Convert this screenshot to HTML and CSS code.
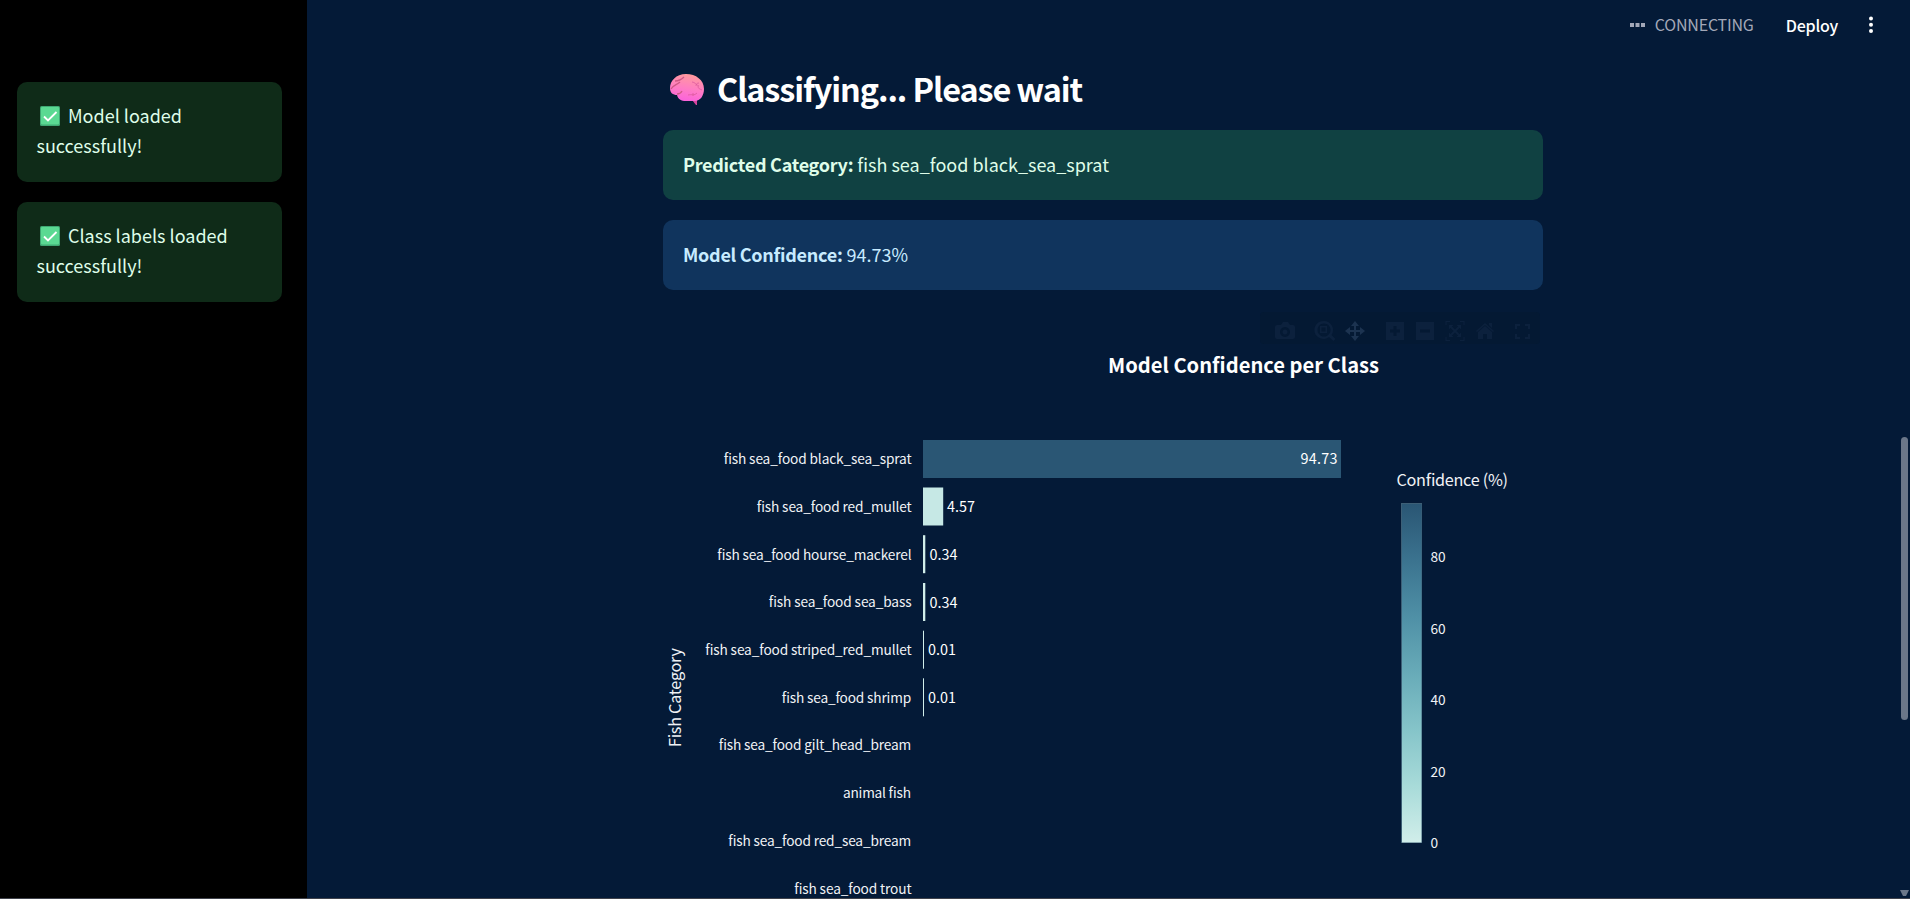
FILE: index.html
```html
<!DOCTYPE html>
<html lang="en">
<head>
<meta charset="utf-8">
<title>Fish classifier</title>
<link rel="stylesheet" href="styles.css">
</head>
<body>
<div class="app">
  <aside class="sidebar">
    <div class="alert side"><svg class="check" viewBox="0 0 20 20"><rect width="20" height="20" rx="1.5" fill="#3fa873"/><rect x="1" y="1" width="18" height="17.5" rx="1" fill="#5ad992"/><path d="M4 10.5l4 4 8.500-8.500" fill="none" stroke="#fff" stroke-width="1.8"/></svg><span>Model loaded</span><br><span>successfully!</span></div>
    <div class="alert side"><svg class="check" viewBox="0 0 20 20"><rect width="20" height="20" rx="1.5" fill="#3fa873"/><rect x="1" y="1" width="18" height="17.5" rx="1" fill="#5ad992"/><path d="M4 10.5l4 4 8.500-8.500" fill="none" stroke="#fff" stroke-width="1.8"/></svg><span>Class labels loaded</span><br><span>successfully!</span></div>
  </aside>
  <main class="main">
    <header class="toolbar">
      <svg class="dots" viewBox="0 0 16 4" fill="#a3a8b8"><path d="M0 0h4v4H0zM5.500 0h4v4h-4zM11 0h4v4h-4z"/></svg>
      <span class="status">CONNECTING</span>
      <span class="deploy">Deploy</span>
      <svg class="menu" viewBox="0 0 4 18" fill="#fff"><circle cx="2" cy="2.5" r="2"/><circle cx="2" cy="8.8" r="2"/><circle cx="2" cy="15.1" r="2"/></svg>
    </header>
    <section class="content">
      <h2 class="heading">
        <svg class="brain" viewBox="0 0 34 31">
          <defs><linearGradient id="pink" x1="0.6" y1="0" x2="0.4" y2="1"><stop offset="0" stop-color="#ff9a9c"/><stop offset="0.55" stop-color="#ff7cc4"/><stop offset="1" stop-color="#fb62dc"/></linearGradient></defs>
          <path d="M22 26l4 5h1v-5z" fill="#d8459f"/>
          <path d="M0 14C0 7 6 0 16 0c10 0 18 6 18 15 0 7-4 12-9 12H16C11 27 8 25 7 21 3 21 0 19 0 14z" fill="url(#pink)"/>
          <path d="M1 15c2-4 6-4 9-7M5 7c4 0 6-1 9-4M7 20c3 0 4-1 5-3" fill="none" stroke="#cf5a86" stroke-width="1.3"/>
          <path d="M22 8c3 0 4 3 7 4M26 12c0-2 1-3 3-3M28 12c0 3 2 3 4 4M18 21c4-1 6 1 9-2M23 19v3" fill="none" stroke="#dc5c9d" stroke-width="0.8"/>
        </svg>
        <span>Classifying... Please wait</span>
      </h2>
      <div class="alert success"><b>Predicted Category:</b> <span>fish sea_food black_sea_sprat</span></div>
      <div class="alert info"><b>Model Confidence:</b> <span>94.73%</span></div>
      <svg class="chart" viewBox="663 310 880 588">
        <defs><linearGradient id="scale" x1="0" y1="0" x2="0" y2="1"><stop offset="0" stop-color="#2a5674"/><stop offset="0.1667" stop-color="#3b738f"/><stop offset="0.3333" stop-color="#4f90a6"/><stop offset="0.5" stop-color="#68abb8"/><stop offset="0.6667" stop-color="#85c4c9"/><stop offset="0.8333" stop-color="#a8dbd9"/><stop offset="1" stop-color="#d1eeea"/></linearGradient></defs>
        <rect x="1260" y="312" width="280" height="32" rx="4" fill="#041933"/>
        <g class="modebar">
          <path fill-rule="evenodd" d="M1277 325h4l2-3h5l2 3h3q2 0 2 2v10q0 2-2 2h-16q-2 0-2-2v-10q0-2 2-2zM1285 327a5 5 0 1 0 .01 0zM1285 329.500a2.500 2.500 0 1 0 .01 0z"/>
          <path fill-rule="evenodd" d="M1324 321a9 9 0 0 1 7.500 14l4 4-2 2-4.500-4a9 9 0 1 1-5-16zM1324 323.500a6.500 6.500 0 1 0 .01 0z"/><path fill-rule="evenodd" d="M1320 326h7v7h-7zM1321.500 327.500v4h4v-4z"/>
          <path class="active" d="M1355 321l4 5h-3v4h4v-3l5 4-5 4v-3h-4v4h3l-4 5-4-5h3v-4h-4v3l-5-4 5-4v3h4v-4h-3z"/>
          <path fill-rule="evenodd" d="M1386 322h18v18h-18zM1393.500 326v3.500h-3.500v3h3.500v3.500h3v-3.500h3.500v-3h-3.500v-3.500z"/>
          <path fill-rule="evenodd" d="M1416 322h18v18h-18zM1420 329.500v3h10v-3z"/>
          <path class="thin" d="M1446 325v-3.500h4M1460 321.500h4v3.500M1464 337v3.500h-4M1450 340.500h-4v-3.500"/><path class="line" d="M1450.500 326.500l9 9M1459.500 326.500l-9 9"/><path d="M1449 325h4.500l-4.500 4.500zM1461 325v4.500l-4.500-4.500zM1461 337h-4.500l4.500-4.500zM1449 337v-4.500l4.500 4.500z"/>
          <path d="M1485 323l9 8-1 1-8-7-8 7-1-1zM1489 323h3v5l-3-3zM1478 332l7-6 7 6v7h-5v-5h-4v5h-5z"/>
          <path class="line" d="M1516 329v-4h4M1525 325h4v4M1529 334v4h-4M1520 338h-4v-4"/>
        </g>
        <text class="title" x="1108" y="372.500" textLength="271" lengthAdjust="spacingAndGlyphs">Model Confidence per Class</text>
        <g class="bars">
          <rect x="923" y="440" width="418" height="38" fill="#2a5674"/>
          <rect x="923" y="487.500" width="20.200" height="38" fill="#c6e8e5"/>
          <rect x="923" y="535.200" width="2.300" height="38" fill="#d1eeea"/>
          <rect x="923" y="583" width="2.300" height="38" fill="#d1eeea"/>
          <rect x="923" y="630.700" width="1" height="38" fill="#d1eeea"/>
          <rect x="923" y="678.300" width="1" height="38" fill="#d1eeea"/>
        </g>
        <g class="label">
          <text x="723.500" y="464" textLength="188">fish sea_food black_sea_sprat</text>
          <text x="756.500" y="512" textLength="155">fish sea_food red_mullet</text>
          <text x="717" y="560" textLength="194.500">fish sea_food hourse_mackerel</text>
          <text x="768.500" y="607" textLength="143">fish sea_food sea_bass</text>
          <text x="705" y="655" textLength="206.500">fish sea_food striped_red_mullet</text>
          <text x="781.500" y="703" textLength="129.500">fish sea_food shrimp</text>
          <text x="718.500" y="750" textLength="192.500">fish sea_food gilt_head_bream</text>
          <text x="843" y="798" textLength="68">animal fish</text>
          <text x="728" y="846" textLength="183">fish sea_food red_sea_bream</text>
          <text x="794" y="894" textLength="117.500">fish sea_food trout</text>
          <text x="1430.500" y="562" textLength="15">80</text>
          <text x="1430.500" y="634" textLength="15">60</text>
          <text x="1430.500" y="705" textLength="15">40</text>
          <text x="1430.500" y="777" textLength="15">20</text>
          <text x="1430.500" y="848" textLength="7.500">0</text>
        </g>
        <g class="value">
          <text x="1300.500" y="464" textLength="37">94.73</text>
          <text x="947" y="512" textLength="28">4.57</text>
          <text x="929.500" y="560" textLength="28">0.34</text>
          <text x="929.500" y="608" textLength="28">0.34</text>
          <text x="928" y="655" textLength="28">0.01</text>
          <text x="928" y="703" textLength="28">0.01</text>
        </g>
        <text class="axis" transform="translate(681 747) rotate(-90)" textLength="99">Fish Category</text>
        <text class="axis" x="1396.500" y="486" textLength="111.500">Confidence (%)</text>
        <rect x="1401" y="503" width="21" height="340" fill="#3d5f76"/>
        <rect x="1402" y="504" width="19.500" height="338.500" fill="url(#scale)"/>
      </svg>
    </section>
    <div class="scrollbar"><i class="thumb"></i><svg class="arrow" viewBox="0 0 9 6"><path d="M0 0h9L6 6H3z" fill="#6b7789"/></svg></div>
  </main>
</div>
</body>
</html>
```
FILE: styles.css
```css
* { box-sizing: border-box; }
body { margin: 0; overflow: hidden; background: #041a37; color: #fff; font-family: "Source Sans Pro", "Noto Sans CJK SC", "Noto Sans", sans-serif; font-size: 18px; line-height: 30px; }
.app { display: flex; height: 899px; border-bottom: 1px solid #3f424b; }
.sidebar { width: 307px; background: #000; padding: 82px 25px 0 17px; display: flex; flex-direction: column; gap: 20px; }
.main { position: relative; flex: 1; }
.alert { border-radius: 10px; padding: 19px 20px; height: 70px; white-space: nowrap; }
.alert b { letter-spacing: -0.27px; }
.side { height: 100px; background: #0f2b18; color: #dffde9; padding: 18px 20px 18px 19.5px; }
.check { width: 20px; height: 20px; margin: 0 8px 0 3.5px; vertical-align: -3px; }
.success { background: #104142; color: #dffde9; }
.info { background: #10345d; color: #c7ebff; margin-top: 20px; }
.toolbar { height: 50px; padding-right: 37px; display: flex; justify-content: flex-end; align-items: center; font-size: 16px; line-height: 24px; }
.dots { width: 16px; height: 4px; margin-right: 9px; }
.status { color: #a3a8b8; margin: -3px 32px 0 0; letter-spacing: -0.2px; }
.deploy { margin: -1px 31px 0 0; font-weight: 500; letter-spacing: -0.2px; }
.menu { width: 4px; height: 18px; }
.content { width: 880px; margin-left: 356px; }
.heading { height: 80px; margin: 0; padding: 12px 0 0 7px; display: flex; font-size: 32.4px; line-height: 52px; font-weight: 600; letter-spacing: -1.1px; white-space: nowrap; }
.brain { width: 34px; height: 31px; margin: 12px 13px 0 0; }
.chart { display: block; width: 880px; height: 588px; margin-top: 20px; fill: #f0f2f5; }
.modebar { fill: #0c213d; }
.active { fill: #1c3350; }
.line { fill: none; stroke: #0c213d; stroke-width: 2; }
.thin { fill: none; stroke: #0c213d; stroke-width: 1.2; }
.title { font-size: 20.300px; font-weight: 700; fill: #fff; }
.label { font-size: 13.700px; }
.value { font-size: 14.400px; fill: #fff; }
.axis { font-size: 16.200px; }
.scrollbar { position: absolute; right: 1px; top: 0; bottom: 0; width: 9px; }
.thumb { position: absolute; left: 1px; top: 437px; width: 7px; height: 283px; border-radius: 4px; background: #6b7789; }
.arrow { position: absolute; left: 0; top: 890px; width: 9px; height: 6px; }
```
